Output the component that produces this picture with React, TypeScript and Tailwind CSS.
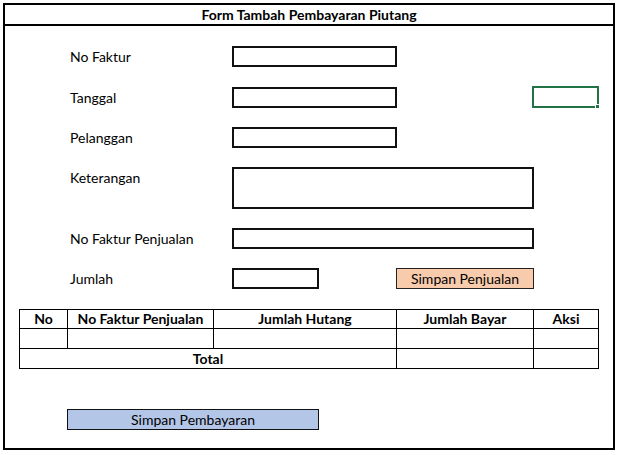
const FIELDS = [
  { label: 'No Faktur', w: 'w-[165px]', h: 'h-[21px]', mt: 'mt-[20px]' },
  { label: 'Tanggal', w: 'w-[165px]', h: 'h-[21px]', mt: 'mt-[20px]', selected: true },
  { label: 'Pelanggan', w: 'w-[165px]', h: 'h-[21px]', mt: 'mt-[19px]' },
  { label: 'Keterangan', w: 'w-[302px]', h: 'h-[42px]', mt: 'mt-[19px]' },
  { label: 'No Faktur Penjualan', w: 'w-[302px]', h: 'h-[21px]', mt: 'mt-[19px]' },
];

const HEAD = [
  { label: 'No', w: 'w-[48px]' },
  { label: 'No Faktur Penjualan', w: 'w-[146px]' },
  { label: 'Jumlah Hutang', w: 'w-[183px]' },
  { label: 'Jumlah Bayar', w: 'w-[137px]' },
  { label: 'Aksi', w: 'w-[65px]' },
];

export default function App() {
  return (
    <div className="h-[455px] w-[619px] bg-white pl-[3px] pt-[3px] font-['Lato',sans-serif] text-[14px] text-black">
      <div className="flex h-[447px] w-[612px] flex-col border-2 border-black">
        <div className="flex h-[21px] items-center justify-center border-b-2 border-black font-bold">
          Form Tambah Pembayaran Piutang
        </div>

        <div className="flex flex-col">
          {FIELDS.map((f) => (
            <div key={f.label} className={`flex items-start pl-[65px] ${f.mt}`}>
              <span className="flex h-[21px] w-[162px] items-center">{f.label}</span>
              <div className={`${f.w} ${f.h} border-2 border-[#111]`} />
              {f.selected && (
                <div className="relative -mt-[1px] ml-[135px] h-[22px] w-[67px] border-2 border-[#217346]">
                  <span className="absolute -bottom-[3px] -right-[3px] h-[5px] w-[5px] border border-white bg-[#217346]" />
                </div>
              )}
            </div>
          ))}

          <div className="mt-[19px] flex items-start pl-[65px]">
            <span className="flex h-[21px] w-[162px] items-center">Jumlah</span>
            <div className="h-[21px] w-[87px] border-2 border-[#111]" />
            <button className="ml-[77px] flex h-[21px] w-[138px] items-center justify-center border border-[#222] bg-[#f8cbad]">
              Simpan Penjualan
            </button>
          </div>

          <table className="ml-[14px] mt-[20px] w-[580px] border-collapse">
            <thead>
              <tr className="h-[19px]">
                {HEAD.map((h) => (
                  <th key={h.label} className={`${h.w} border border-black p-0 text-center font-bold leading-none`}>
                    {h.label}
                  </th>
                ))}
              </tr>
            </thead>
            <tbody>
              <tr className="h-[20px]">
                {HEAD.map((h) => (
                  <td key={h.label} className="border border-black p-0" />
                ))}
              </tr>
              <tr className="h-[20px]">
                <td colSpan={3} className="border border-black p-0 text-center font-bold leading-none">
                  Total
                </td>
                <td className="border border-black p-0" />
                <td className="border border-black p-0" />
              </tr>
            </tbody>
          </table>

          <button className="ml-[62px] mt-[40px] flex h-[21px] w-[252px] items-center justify-center border border-[#111] bg-[#b4c6e7]">
            Simpan Pembayaran
          </button>
        </div>
      </div>
    </div>
  );
}
